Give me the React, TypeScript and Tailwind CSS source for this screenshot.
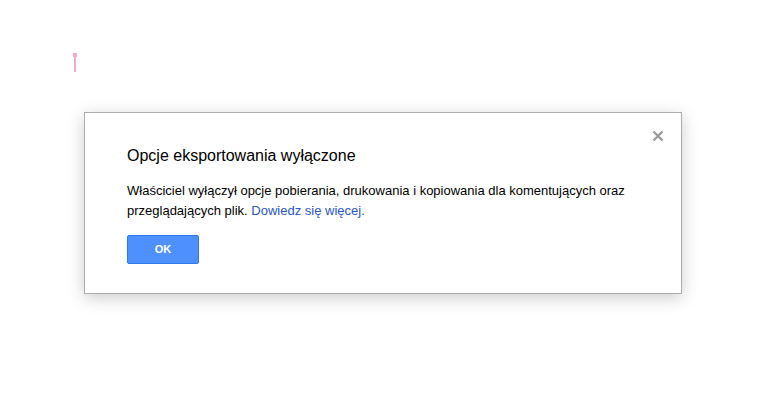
export default function App() {
  return (
    <div className="min-h-[418px] w-[765px] bg-white font-['Liberation_Sans',Arial,sans-serif] text-black">
      {/* text cursor marker */}
      <div className="flex flex-col items-center w-[4px] ml-[73px] pt-[53px]">
        <div className="w-[4px] h-[4px] bg-[#f5a9cf]" />
        <div className="w-[2px] h-[15px] bg-[#f5a9cf]" />
      </div>

      <div className="ml-[84px] mt-[40px] w-[598px] h-[182px] border border-[#acacac] bg-white shadow-[0_4px_16px_rgba(0,0,0,0.2)] relative">
        <button className="absolute right-[17px] top-[17px] w-[12px] h-[12px] flex items-center justify-center">
          <svg width="12" height="12" viewBox="0 0 12 12">
            <path d="M1.5 1.5 L10.5 10.5 M10.5 1.5 L1.5 10.5" stroke="#9a9a9a" strokeWidth="2.4" />
          </svg>
        </button>
        <div className="pl-[42px] pr-[42px] pt-[33px]">
          <h1 className="text-[16px] leading-[20px] font-normal">Opcje eksportowania wyłączone</h1>
          <p className="mt-[15px] text-[13px] leading-[20px]">
            Właściciel wyłączył opcje pobierania, drukowania i kopiowania dla komentujących oraz przeglądających plik.{' '}
            <span className="text-[#2a56c6]">Dowiedz się więcej.</span>
          </p>
          <button className="mt-[14px] w-[72px] h-[29px] rounded-[2px] bg-[#4d90fe] border border-[#3079ed] text-white text-[11px] font-bold">
            OK
          </button>
        </div>
      </div>
    </div>
  );
}
